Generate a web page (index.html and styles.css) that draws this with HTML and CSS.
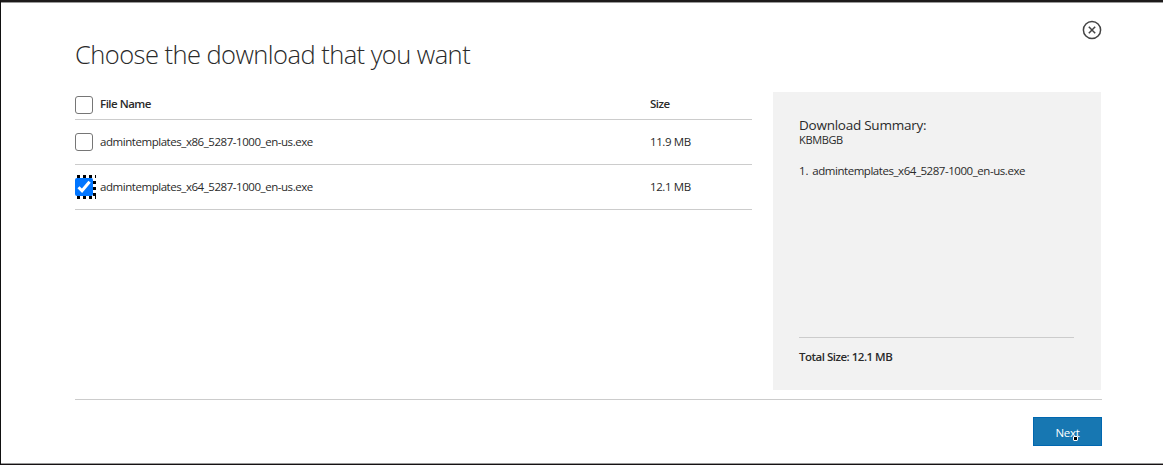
FILE: index.html
```html
<!DOCTYPE html>
<html lang="en">
<head>
<meta charset="utf-8">
<title>Choose the download that you want</title>
<link rel="stylesheet" href="styles.css">
</head>
<body>
<main class="dialog">
  <div class="topbar">
    <h1 class="title"><span>Choose the download that you want</span></h1>
    <svg class="close" viewBox="0 0 20 20" width="20" height="20"><circle cx="10" cy="10" r="8.6"/><path d="M6.8 6.8l6.4 6.4M13.2 6.8l-6.4 6.4"/></svg>
  </div>
  <div class="content">
    <section class="files">
      <div class="row head"><i class="box"></i><span class="name">File Name</span><span class="size">Size</span></div>
      <div class="row"><i class="box"></i><span class="name file">admintemplates_x86_5287-1000_en-us.exe</span><span class="size amount">11.9 MB</span></div>
      <div class="row">
        <svg class="checked" viewBox="0 0 22 24" width="22" height="24">
          <path class="dots" d="M2 1.5H21M2 22.5H21"/><path class="dots" d="M19.5 6V21"/>
          <rect x="0" y="3" width="18" height="18" rx="2" fill="#0075ff"/>
          <path class="tick" d="M3.5 12.3L7 15.8L14.6 6.8"/>
        </svg>
        <span class="name file">admintemplates_x64_5287-1000_en-us.exe</span><span class="size amount">12.1 MB</span>
      </div>
    </section>
    <aside class="summary">
      <h2 class="heading">Download Summary:</h2>
      <div class="units">KBMBGB</div>
      <div class="item"><span class="num">1.</span><span class="file">admintemplates_x64_5287-1000_en-us.exe</span></div>
      <div class="total"><span>Total Size: 12.1 MB</span></div>
    </aside>
  </div>
  <footer class="footer"><div class="next"><span>Next</span><i class="pointer"></i></div></footer>
</main>
</body>
</html>
```
FILE: styles.css
```css
* { box-sizing: border-box; }
body { margin: 0; background: #fff; font-family: "Open Sans", "Noto Sans", sans-serif; font-size: 11.5px; line-height: 16px; color: #2a2a2a; }
.dialog { width: 1163px; height: 465px; overflow: hidden; padding: 0 61px 0 74px; border-left: 1px solid #111; border-top: 2px solid #1d1b1b; border-bottom: 1px solid #161113; box-shadow: inset 0 1px #999, inset 0 -1px #999; }
.topbar { display: flex; justify-content: space-between; height: 90px; }
.title { margin: 32px 0 0; font-size: 25.5px; line-height: 40px; font-weight: 300; letter-spacing: -.55px; white-space: nowrap; }
.close { margin-top: 18px; fill: none; stroke: #444; stroke-width: 1.5; }
.content { display: flex; justify-content: space-between; height: 307px; }
.files { width: 677px; }
.row { display: flex; align-items: center; height: 45px; border-bottom: 1px solid #ccc; }
.head { height: 28px; font-weight: 600; padding-bottom: 3px; letter-spacing: -.5px; }
.box { width: 18px; height: 18px; border: 1px solid #767676; border-radius: 3px; margin-right: 7px; }
.head .box { position: relative; top: 1px; }
.checked { margin-right: 3px; overflow: visible; }
.dots { fill: none; stroke: #000; stroke-width: 3; stroke-dasharray: 3 3; }
.tick { fill: none; stroke: #fff; stroke-width: 3; }
.name { flex: 1; white-space: nowrap; }
.size { width: 102px; white-space: nowrap; }
.amount { letter-spacing: -.4px; }
.file { letter-spacing: -.45px; white-space: nowrap; }
.summary { width: 328px; height: 298px; background: #f2f2f2; padding: 24px 27px 24px 26px; display: flex; flex-direction: column; margin-right: 1px; }
.heading { margin: 0; font-size: 13.5px; line-height: 18px; font-weight: 400; letter-spacing: -.25px; }
.units { line-height: 12px; font-size: 11px; letter-spacing: -.35px; }
.item { display: flex; gap: 4px; margin-top: 17px; }
.num { letter-spacing: -.2px; }
.total { margin-top: auto; height: 29px; padding-top: 11px; border-top: 1px solid #ccc; font-weight: 600; letter-spacing: -.5px; }
.footer { height: 64px; border-top: 1px solid #ccc; padding-top: 17px; display: flex; justify-content: flex-end; }
.next { width: 69px; height: 29px; background: #1777b2; border: 1px solid #0067b0; color: #fff; text-align: center; line-height: 29px; letter-spacing: -.3px; position: relative; }
.pointer { position: absolute; left: 39px; top: 18px; width: 5px; height: 5px; background: #000; border: 1px solid #fff; border-radius: 1px; }
```
